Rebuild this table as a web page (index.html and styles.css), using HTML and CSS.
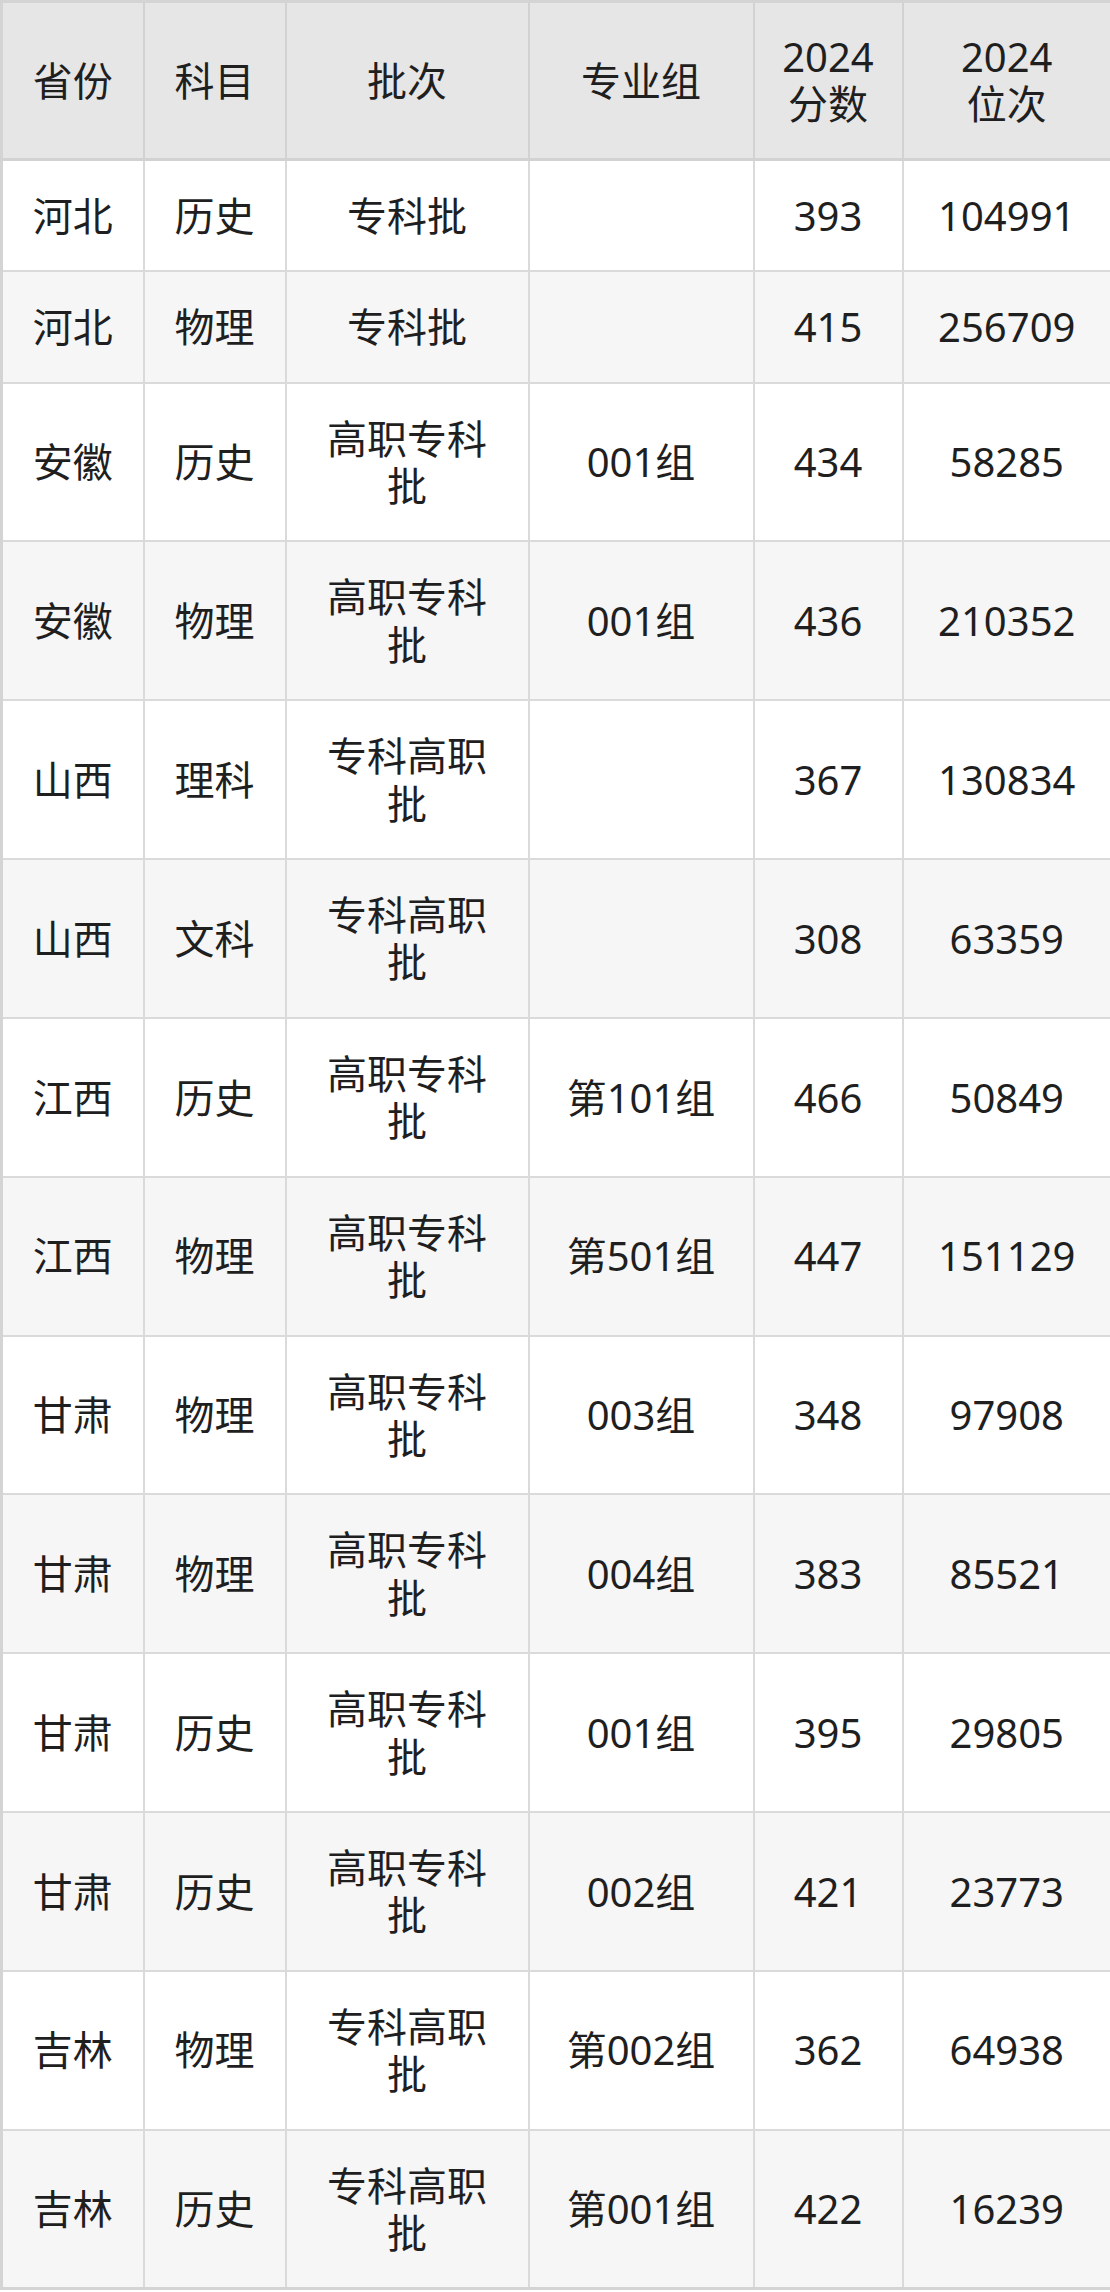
FILE: index.html
```html
<!DOCTYPE html>
<html lang="zh">
<head>
<meta charset="utf-8">
<link rel="stylesheet" href="styles.css">
</head>
<body>
<table class="score-table">
  <colgroup>
    <col class="c1"><col class="c2"><col class="c3"><col class="c4"><col class="c5"><col class="c6">
  </colgroup>
  <thead>
    <tr><th>省份</th><th>科目</th><th>批次</th><th>专业组</th><th>2024<br>分数</th><th>2024<br>位次</th></tr>
  </thead>
  <tbody>
    <tr><td>河北</td><td>历史</td><td>专科批</td><td></td><td>393</td><td>104991</td></tr>
    <tr><td>河北</td><td>物理</td><td>专科批</td><td></td><td>415</td><td>256709</td></tr>
    <tr><td>安徽</td><td>历史</td><td>高职专科<br>批</td><td>001组</td><td>434</td><td>58285</td></tr>
    <tr><td>安徽</td><td>物理</td><td>高职专科<br>批</td><td>001组</td><td>436</td><td>210352</td></tr>
    <tr><td>山西</td><td>理科</td><td>专科高职<br>批</td><td></td><td>367</td><td>130834</td></tr>
    <tr><td>山西</td><td>文科</td><td>专科高职<br>批</td><td></td><td>308</td><td>63359</td></tr>
    <tr><td>江西</td><td>历史</td><td>高职专科<br>批</td><td>第101组</td><td>466</td><td>50849</td></tr>
    <tr><td>江西</td><td>物理</td><td>高职专科<br>批</td><td>第501组</td><td>447</td><td>151129</td></tr>
    <tr><td>甘肃</td><td>物理</td><td>高职专科<br>批</td><td>003组</td><td>348</td><td>97908</td></tr>
    <tr><td>甘肃</td><td>物理</td><td>高职专科<br>批</td><td>004组</td><td>383</td><td>85521</td></tr>
    <tr><td>甘肃</td><td>历史</td><td>高职专科<br>批</td><td>001组</td><td>395</td><td>29805</td></tr>
    <tr><td>甘肃</td><td>历史</td><td>高职专科<br>批</td><td>002组</td><td>421</td><td>23773</td></tr>
    <tr><td>吉林</td><td>物理</td><td>专科高职<br>批</td><td>第002组</td><td>362</td><td>64938</td></tr>
    <tr><td>吉林</td><td>历史</td><td>专科高职<br>批</td><td>第001组</td><td>422</td><td>16239</td></tr>
  </tbody>
</table>
</body>
</html>
```

FILE: styles.css
```css
html, body {
  margin: 0;
  padding: 0;
  background: #ffffff;
}

.score-table {
  width: 1110px;
  border-collapse: collapse;
  table-layout: fixed;
  font-family: "Noto Sans", "Noto Sans CJK SC", sans-serif;
  font-size: 40px;
  line-height: 47.4px;
  color: #1f1f1f;
  border: 3px solid #d4d4d4;
}

.c1 { width: 142px; }
.c2 { width: 142px; }
.c3 { width: 243px; }
.c4 { width: 225px; }
.c5 { width: 149px; }
.c6 { width: 209px; }

.score-table th,
.score-table td {
  border: 2px solid #dadada;
  text-align: center;
  vertical-align: middle;
  padding: 31px 2px;
  font-weight: normal;
}

.score-table thead th {
  background: #e6e6e6;
  padding: 30px 2px;
  border-bottom: 3px solid #d2d2d2;
  border-color: #d2d2d2;
}

.score-table tbody tr:nth-child(odd) td {
  background: #ffffff;
}

.score-table tbody tr:nth-child(even) td {
  background: #f6f6f6;
}
```
